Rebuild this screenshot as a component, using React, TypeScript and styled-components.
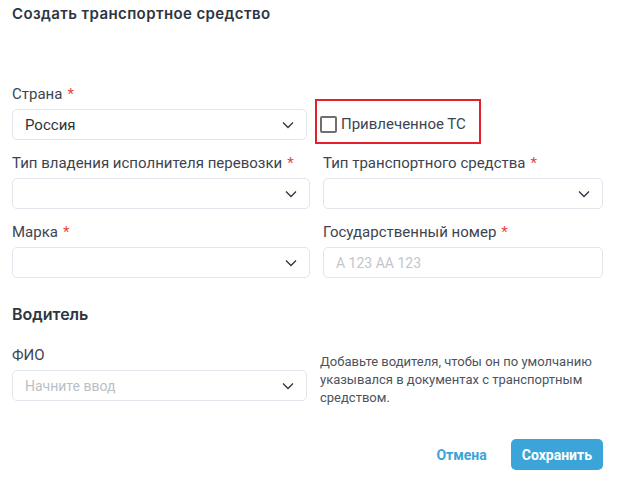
import React from 'react';
import styled, { createGlobalStyle } from 'styled-components';

const GlobalStyle = createGlobalStyle`
  body {
    margin: 0;
    background: #ffffff;
    font-family: Roboto, "Liberation Sans", Arial, sans-serif;
    color: #3a414c;
  }
  * {
    box-sizing: border-box;
  }
`;

const Modal = styled.div`
  width: 623px;
  padding: 4px 20px 0 12px;
`;

const Title = styled.h2`
  margin: 0;
  font-family: Inter, Roboto, sans-serif;
  font-size: 15px;
  line-height: 20px;
  font-weight: 600;
  letter-spacing: 0.4px;
  color: #2d3540;
`;

const SectionTitle = styled.h3`
  margin: 26px 0 23px;
  font-family: Inter, Roboto, sans-serif;
  font-size: 16px;
  line-height: 20px;
  font-weight: 600;
  color: #2d3540;
`;

const Row = styled.div`
  display: grid;
  grid-template-columns: 298px 280px;
  column-gap: 13px;
  margin-top: 15px;
`;

const FirstRow = styled.div`
  display: flex;
  align-items: flex-end;
  gap: 8px;
  margin-top: 62px;
`;

const DriverRow = styled.div`
  display: flex;
  align-items: flex-start;
  gap: 13px;
`;

const Field = styled.div<{ $width?: number }>`
  display: flex;
  flex-direction: column;
  flex-shrink: 0;
  gap: 7px;
  width: ${(p) => (p.$width ? `${p.$width}px` : 'auto')};
`;

const Label = styled.label`
  font-size: 15px;
  line-height: 16px;
  color: #3d4450;
`;

const Required = styled.span`
  color: #e8453c;
  margin-left: 5px;
`;

const SelectBox = styled.div`
  display: flex;
  align-items: center;
  justify-content: space-between;
  height: 31px;
  padding: 0 12px;
  border: 1px solid #e1e5ec;
  border-radius: 5px;
  background: #fff;
`;

const Value = styled.span<{ $placeholder?: boolean }>`
  font-size: ${(p) => (p.$placeholder ? 14 : 15)}px;
  color: ${(p) => (p.$placeholder ? '#bcc0c6' : '#2f3236')};
`;

const TextInput = styled.input`
  height: 31px;
  padding: 0 12px;
  border: 1px solid #e1e5ec;
  border-radius: 5px;
  font-family: inherit;
  font-size: 14px;
  color: #2f3236;
  outline: none;
  &::placeholder {
    color: #c2c6cc;
  }
`;

const Highlight = styled.div`
  display: flex;
  align-items: center;
  gap: 4px;
  width: 166px;
  height: 45px;
  margin-bottom: -4px;
  padding: 13px 0 8px 3px;
  border: 2px solid #e4202a;
`;

const CheckSquare = styled.span`
  width: 17px;
  height: 17px;
  border: 2px solid #6f6f6f;
  border-radius: 2px;
  flex-shrink: 0;
`;

const CheckText = styled.span`
  font-size: 15px;
  color: #3d4450;
`;

const Hint = styled.p`
  margin: 6px 0 0;
  width: 283px;
  font-size: 13px;
  line-height: 18px;
  color: #4c535e;
`;

const Footer = styled.div`
  display: flex;
  justify-content: flex-end;
  align-items: center;
  margin-top: 32px;
`;

const LinkButton = styled.button`
  height: 31px;
  padding: 0 12px;
  margin-right: 12px;
  border: none;
  background: transparent;
  font-family: inherit;
  font-size: 14px;
  font-weight: 700;
  color: #3aa3d8;
  cursor: pointer;
`;

const PrimaryButton = styled.button`
  height: 31px;
  padding: 0 11px;
  border: none;
  border-radius: 5px;
  background: #3ba5da;
  font-family: inherit;
  font-size: 14px;
  font-weight: 700;
  color: #fff;
  cursor: pointer;
`;

function Chevron() {
  return (
    <svg width="12" height="8" viewBox="0 0 12 8" fill="none">
      <path d="M1 1.5 6 6.5 11 1.5" stroke="#2d3540" strokeWidth="1.3" />
    </svg>
  );
}

function Select({ value, placeholder }: { value?: string; placeholder?: string }) {
  return (
    <SelectBox>
      <Value $placeholder={!value}>{value ?? placeholder ?? ''}</Value>
      <Chevron />
    </SelectBox>
  );
}

export default function App() {
  return (
    <>
      <GlobalStyle />
      <Modal>
        <Title>Создать транспортное средство</Title>

        <FirstRow>
          <Field $width={295}>
            <Label>
              Страна<Required>*</Required>
            </Label>
            <Select value="Россия" />
          </Field>
          <Highlight>
            <CheckSquare />
            <CheckText>Привлеченное ТС</CheckText>
          </Highlight>
        </FirstRow>

        <Row>
          <Field>
            <Label>
              Тип владения исполнителя перевозки<Required>*</Required>
            </Label>
            <Select />
          </Field>
          <Field>
            <Label>
              Тип транспортного средства<Required>*</Required>
            </Label>
            <Select />
          </Field>
        </Row>

        <Row>
          <Field>
            <Label>
              Марка<Required>*</Required>
            </Label>
            <Select />
          </Field>
          <Field>
            <Label>
              Государственный номер<Required>*</Required>
            </Label>
            <TextInput placeholder="А 123 АА 123" />
          </Field>
        </Row>

        <SectionTitle>Водитель</SectionTitle>

        <DriverRow>
          <Field $width={295}>
            <Label>ФИО</Label>
            <Select placeholder="Начните ввод" />
          </Field>
          <Hint>
            Добавьте водителя, чтобы он по умолчанию указывался в документах с
            транспортным средством.
          </Hint>
        </DriverRow>

        <Footer>
          <LinkButton>Отмена</LinkButton>
          <PrimaryButton>Сохранить</PrimaryButton>
        </Footer>
      </Modal>
    </>
  );
}
